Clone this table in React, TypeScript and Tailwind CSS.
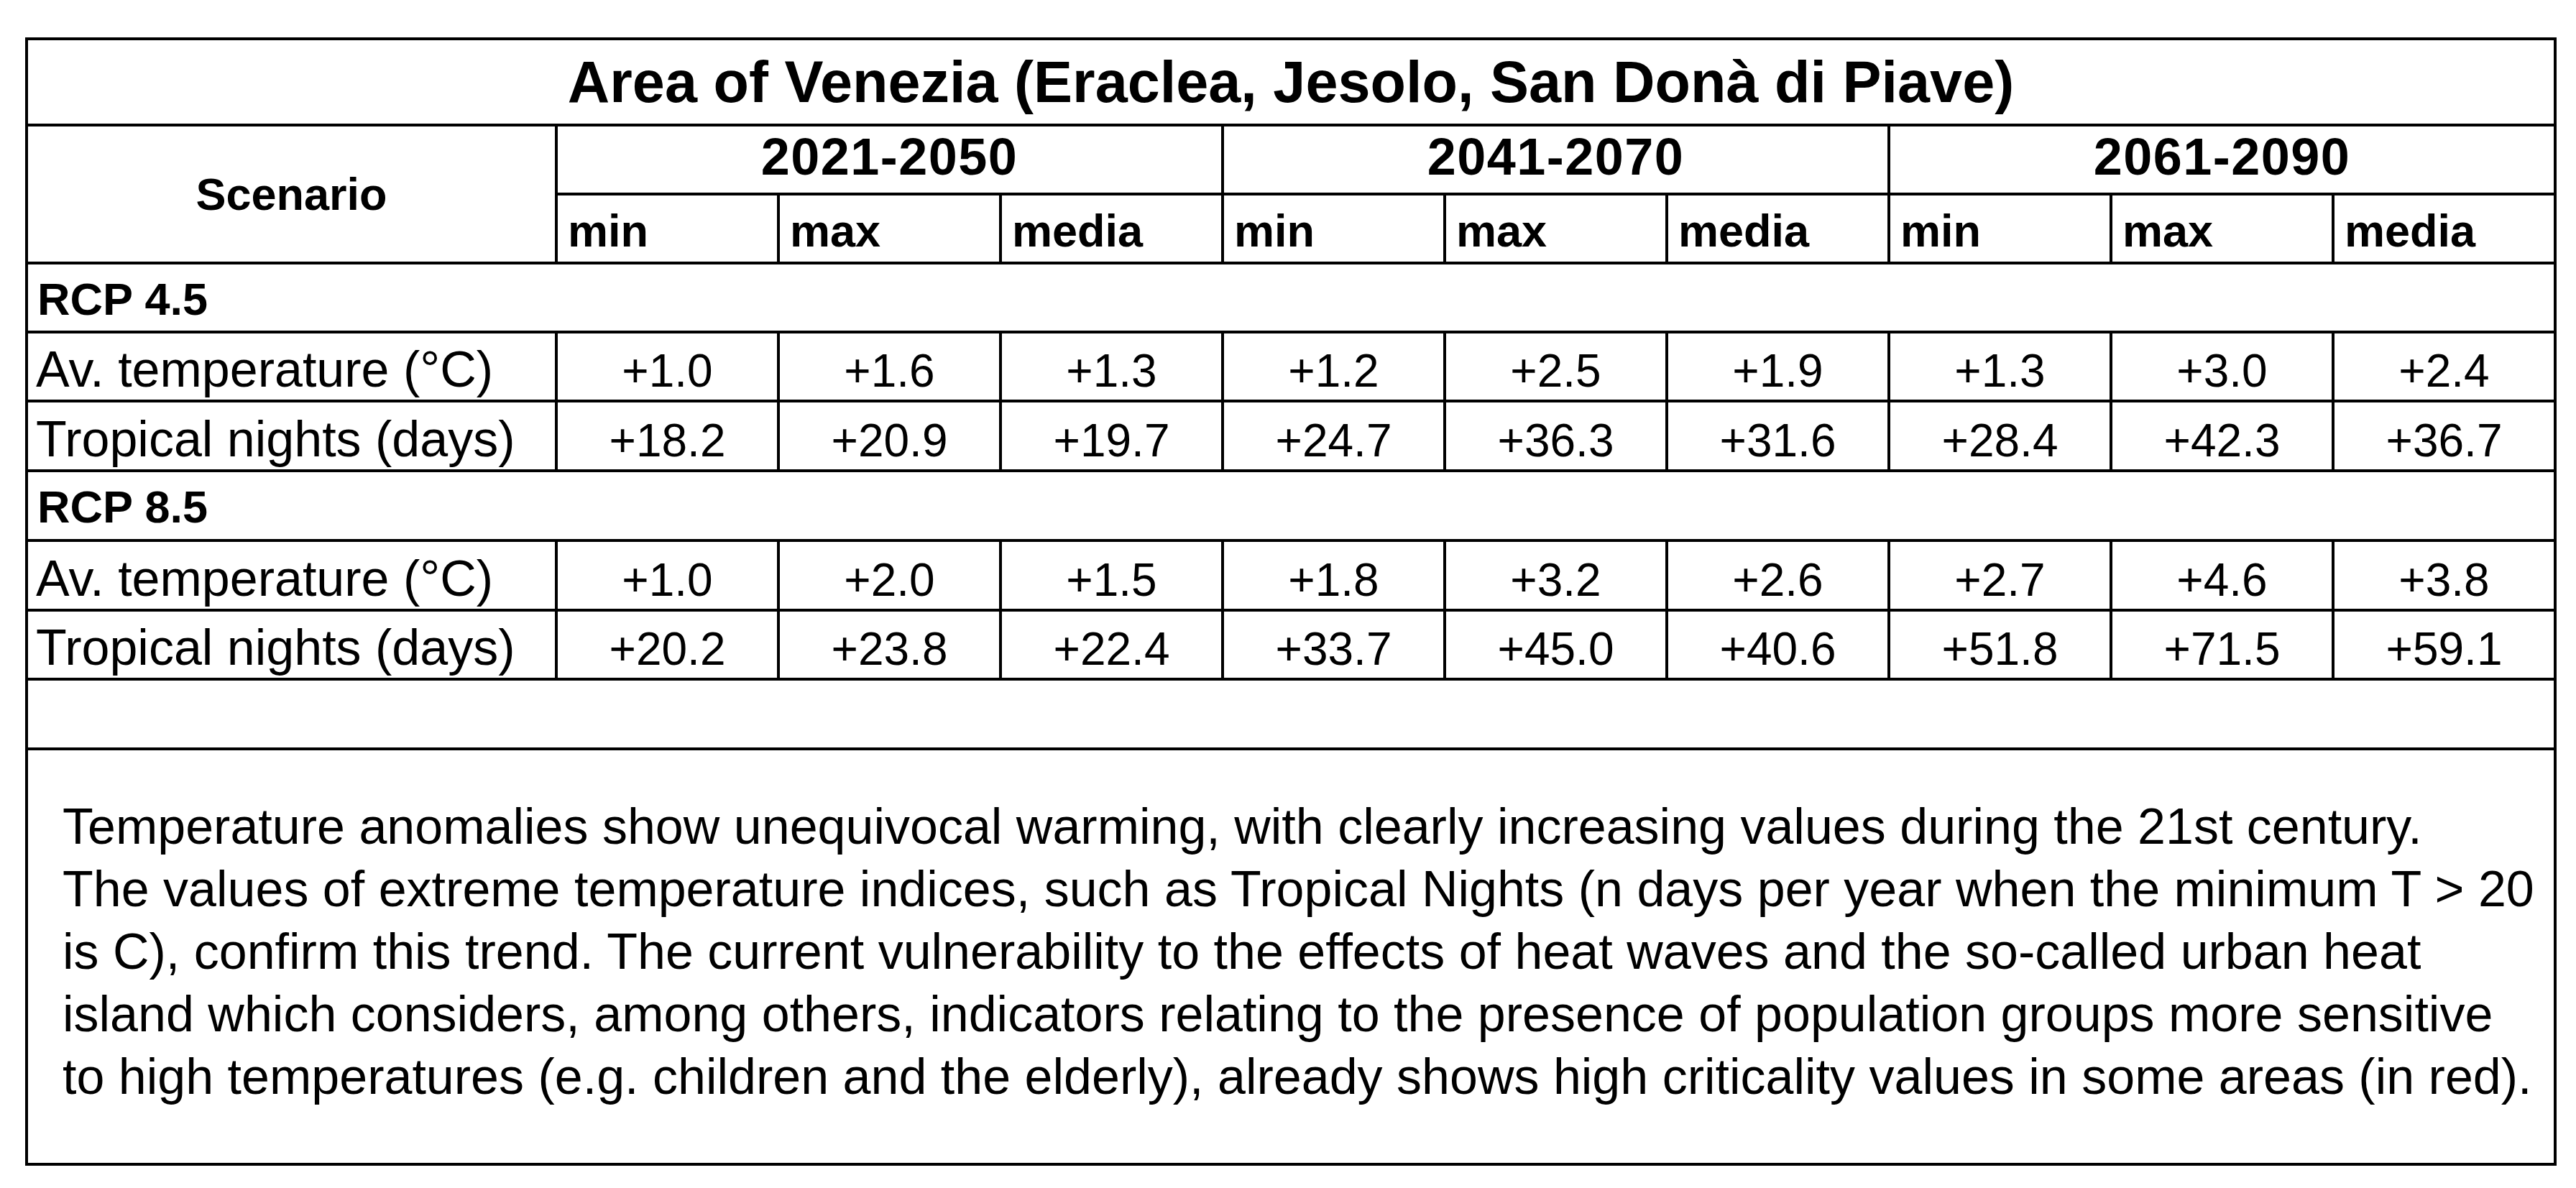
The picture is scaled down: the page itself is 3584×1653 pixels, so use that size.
const periods = ["2021-2050", "2041-2070", "2061-2090"];
const stats = ["min", "max", "media"];

const scenarios = [
  {
    name: "RCP 4.5",
    rows: [
      { label: "Av. temperature (°C)", values: ["+1.0", "+1.6", "+1.3", "+1.2", "+2.5", "+1.9", "+1.3", "+3.0", "+2.4"] },
      { label: "Tropical nights (days)", values: ["+18.2", "+20.9", "+19.7", "+24.7", "+36.3", "+31.6", "+28.4", "+42.3", "+36.7"] },
    ],
  },
  {
    name: "RCP 8.5",
    rows: [
      { label: "Av. temperature (°C)", values: ["+1.0", "+2.0", "+1.5", "+1.8", "+3.2", "+2.6", "+2.7", "+4.6", "+3.8"] },
      { label: "Tropical nights (days)", values: ["+20.2", "+23.8", "+22.4", "+33.7", "+45.0", "+40.6", "+51.8", "+71.5", "+59.1"] },
    ],
  },
];

// line breaks follow the source document
const note = [
  "Temperature anomalies show unequivocal warming, with clearly increasing values during the 21st century.",
  "The values of extreme temperature indices, such as Tropical Nights (n days per year when the minimum T > 20",
  "is C), confirm this trend. The current vulnerability to the effects of heat waves and the so-called urban heat",
  "island which considers, among others, indicators relating to the presence of population groups more sensitive",
  "to high temperatures (e.g. children and the elderly), already shows high criticality values in some areas (in red).",
];

export default function App() {
  return (
    <div className="min-h-screen bg-white pl-[35px] pt-[52px] font-['Liberation_Sans',Arial,sans-serif] text-black">
      <div className="grid w-max grid-cols-[733px_repeat(9,305px)] grid-rows-[116px_92px_92px_92px_92px_93px_93px_93px_92px_93px_574px] gap-[4px] bg-black p-[4px]">
        <div className="col-span-10 flex items-center justify-center bg-white text-[81px] font-bold leading-none">
          Area of Venezia (Eraclea, Jesolo, San Donà di Piave)
        </div>

        <div className="row-span-2 flex items-center justify-center bg-white text-[63px] font-bold leading-none">
          Scenario
        </div>
        {periods.map((p) => (
          <div
            key={p}
            className="col-span-3 flex items-center justify-center bg-white pb-[8px] text-[72px] font-bold leading-none tracking-[0.02em]"
          >
            {p}
          </div>
        ))}
        {periods.flatMap((p) =>
          stats.map((s) => (
            <div key={p + s} className="flex items-center bg-white pl-[14px] pt-[6px] text-[63px] font-bold leading-none">
              {s}
            </div>
          )),
        )}

        {scenarios.map((sc) => [
          <div key={sc.name} className="col-span-10 flex items-center bg-white pl-[13px] pt-[4px] text-[63px] font-bold leading-none">
            {sc.name}
          </div>,
          ...sc.rows.flatMap((r) => [
            <div
              key={sc.name + r.label}
              className="flex items-center whitespace-nowrap bg-white pl-[11px] pt-[8px] text-[70px] leading-none"
            >
              {r.label}
            </div>,
            ...r.values.map((v, i) => (
              <div
                key={sc.name + r.label + i}
                className="flex items-center justify-center bg-white pt-[12px] text-[64px] leading-none"
              >
                {v}
              </div>
            )),
          ]),
        ])}

        <div className="col-span-10 bg-white" />

        <div className="col-span-10 flex flex-col justify-center bg-white pb-[13px] pl-[48px] text-[70px] leading-[87px]">
          {note.map((line) => (
            <div key={line} className="whitespace-nowrap">
              {line}
            </div>
          ))}
        </div>
      </div>
    </div>
  );
}
